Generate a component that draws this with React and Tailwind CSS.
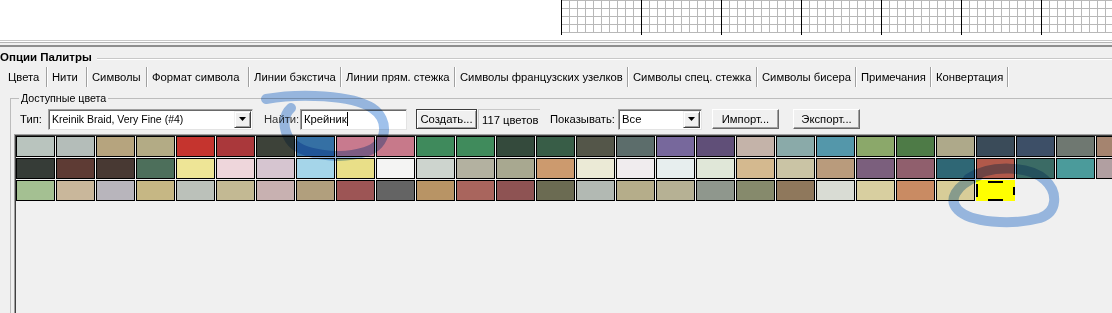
import React from "react";

const TABS = [
  ["Цвета", "w-[44px]"],
  ["Нити", "w-[40px]"],
  ["Символы", "w-[60px]"],
  ["Формат символа", "w-[102px]"],
  ["Линии бэкстича", "w-[92px]"],
  ["Линии прям. стежка", "w-[114px]"],
  ["Символы французских узелков", "w-[173px]"],
  ["Символы спец. стежка", "w-[129px]"],
  ["Символы бисера", "w-[99px]"],
  ["Примечания", "w-[75px]"],
  ["Конвертация", "w-[77px]"],
];

const ROWS = [
  ["#b9c4be", "#b4bdb9", "#b6a47e", "#b3ab85", "#c5342e", "#aa383b", "#3d4239", "#3570a4", "#c87a8e", "#c7798a", "#3f8a5c", "#408b5c", "#344a3c", "#385d47", "#545649", "#5c6d6b", "#77689c", "#604f78", "#c4b3a9", "#8aaaa9", "#5497aa", "#8ba86a", "#4e7b47", "#aea98a", "#3a4b59", "#3d4f67", "#6f7871", "#a5846f"],
  ["#363c37", "#5e3b34", "#483933", "#4d6f5b", "#eee596", "#eed6db", "#d6c5d0", "#a5d5e9", "#e9df88", "#f4f4f3", "#cdd4ce", "#b3b1a0", "#a8a890", "#cc9a6e", "#ebead6", "#f0ecee", "#e7eeee", "#e0e7d8", "#d4b98f", "#cac4a5", "#b99b7c", "#7b5f7d", "#905f6d", "#2f6775", "#b1594a", "#3b6b65", "#4b9b9b", "#b19fa1"],
  ["#a4c092", "#c9b79b", "#b8b5bc", "#c6b784", "#bbc1ba", "#c3b993", "#c8b1b1", "#b19f7d", "#9d5555", "#646464", "#b89465", "#a9655d", "#8e5353", "#6b6b52", "#b2b9b3", "#b5ad8a", "#b6b194", "#8f978d", "#868a6c", "#8f785c", "#d9dcd4", "#d8cfa0", "#c98b63", "#d8cd98"],
];

function Grid() {
  const cols = Array.from({ length: 69 }, (_, i) => i * 8);
  return (
    <svg width="551" height="36" className="block">
      {[0, 8, 16, 24, 32].map((y) => (
        <line key={"h" + y} x1="0" x2="551" y1={y + 0.5} y2={y + 0.5} stroke="#b8b8b8" />
      ))}
      {cols.map((x) => (
        <line
          key={"v" + x}
          x1={x + 0.5}
          x2={x + 0.5}
          y1="0"
          y2={x % 80 === 0 ? 35 : 33}
          stroke={x % 80 === 0 ? "#000" : "#b8b8b8"}
        />
      ))}
    </svg>
  );
}

function DropButton() {
  return (
    <div className="w-[17px] h-[17px] mr-px bg-[#f0f0f0] border border-t-[#f0f0f0] border-l-[#f0f0f0] border-r-[#404040] border-b-[#404040] shadow-[inset_1px_1px_0_#fff,inset_-1px_-1px_0_#a0a0a0] flex items-center justify-center">
      <svg width="7" height="4" viewBox="0 0 7 4">
        <path d="M0 0h7L3.5 4z" fill="#000" />
      </svg>
    </div>
  );
}

function Sunken({ className, children }) {
  return (
    <div className={"h-[21px] bg-white border border-t-[#a0a0a0] border-l-[#a0a0a0] border-r-[#e3e3e3] border-b-[#e3e3e3] shadow-[inset_1px_1px_0_#696969] flex items-center " + className}>
      {children}
    </div>
  );
}

function Button({ className, children }) {
  return (
    <div className={"h-[20px] bg-[#f0f0f0] flex items-center justify-center " + className}>
      {children}
    </div>
  );
}

function Swatch({ color }) {
  return <div className="w-[39px] h-[21px] shrink-0 border border-black" style={{ backgroundColor: color }} />;
}

export default function App() {
  return (
    <div className="relative w-[1112px] h-[313px] overflow-hidden bg-[#f0f0f0] text-black font-['Liberation_Sans',Arial,sans-serif] text-[11.25px] leading-[14px]">
      <div className="h-[40px] bg-white flex">
        <div className="w-[561px] shrink-0" />
        <Grid />
      </div>
      <div className="h-px bg-[#c8c8c8]" />
      <div className="h-px bg-white" />
      <div className="h-px bg-[#b4b4b4]" />
      <div className="h-[2px]" />
      <div className="h-[2px] bg-[#8e8e8e]" />

      <div className="h-[20px] flex items-center">
        <span className="font-bold text-[11.5px] whitespace-nowrap pr-[5px]">Опции Палитры</span>
        <div className="flex-1 mt-[2px] h-px bg-[#c8c8c8] shadow-[0_1px_0_#fff]" />
      </div>

      <div className="h-[20px] flex pl-[3px]">
        {TABS.map(([label, w]) => (
          <div
            key={label}
            className={"h-full shrink-0 pl-[5px] flex items-center whitespace-nowrap border-r border-[#a0a0a0] shadow-[1px_0_0_#fff] " + w}
          >
            {label}
          </div>
        ))}
      </div>

      <fieldset className="mt-[4px] ml-[10px] w-[1200px] pl-[3px] border-t border-l border-[#bcbcbc]">
        <legend className="ml-[5px] px-[2px] leading-[14px] text-[10.7px]">Доступные цвета</legend>

        <div className="mt-[4px] h-[20px] flex items-center whitespace-nowrap">
          <span className="ml-[6px] w-[28px]">Тип:</span>
          <Sunken className="w-[205px] justify-between">
            <span className="pl-[3px] text-[10.5px]">Kreinik Braid, Very Fine (#4)</span>
            <DropButton />
          </Sunken>
          <span className="ml-[11px] w-[36px] text-[#333]">Найти:</span>
          <Sunken className="w-[107px]">
            <span className="pl-[3px]">Крейник</span>
            <span className="w-px h-[14px] bg-black" />
          </Sunken>
          <Button className="ml-[9px] w-[61px] border border-[#3c3c3c] shadow-[inset_1px_1px_0_#fff,inset_-1px_-1px_0_#a0a0a0]">
            Создать...
          </Button>
          <div className="ml-px w-[62px] h-[20px] border-t border-l border-[#c8c8c8] flex items-center pl-[3px]">
            117 цветов
          </div>
          <span className="ml-[10px] w-[68px]">Показывать:</span>
          <Sunken className="w-[84px] justify-between">
            <span className="pl-[3px]">Все</span>
            <DropButton />
          </Sunken>
          <Button className="ml-[10px] w-[67px] border border-t-white border-l-white border-r-[#696969] border-b-[#696969] shadow-[inset_-1px_-1px_0_#a0a0a0]">
            Импорт...
          </Button>
          <Button className="ml-[14px] w-[67px] border border-t-white border-l-white border-r-[#696969] border-b-[#696969] shadow-[inset_-1px_-1px_0_#a0a0a0]">
            Экспорт...
          </Button>
        </div>

        <div className="mt-[5px] h-[200px] pt-px pl-px border-t border-l border-[#a0a0a0] shadow-[inset_1px_1px_0_#404040] flex flex-col gap-px">
          {ROWS.map((row, r) => (
            <div key={r} className="flex gap-px">
              {row.map((c, i) => (
                <Swatch key={i} color={c} />
              ))}
              {r === 2 && (
                <div className="relative w-[39px] h-[21px] shrink-0 bg-[#ffff00]">
                  <svg width="39" height="21" className="absolute inset-0">
                    <g stroke="#000" strokeWidth="2">
                      <line x1="12" x2="27" y1="2" y2="2" />
                      <line x1="12" x2="27" y1="20" y2="20" />
                      <line x1="1" x2="1" y1="4" y2="17" />
                      <line x1="38" x2="38" y1="7" y2="15" />
                    </g>
                  </svg>
                </div>
              )}
            </div>
          ))}
        </div>
      </fieldset>

      <svg width="1112" height="313" className="absolute inset-0 pointer-events-none mix-blend-multiply">
        <g fill="none" stroke="#9fc1eb" strokeWidth="10" strokeLinecap="round" strokeLinejoin="round">
          <path d="M266 99 C300 93 352 95 372 108 C390 120 388 145 365 152 C340 160 300 155 290 140 C282 128 283 115 291 108" />
          <path d="M968 179 C990 164 1030 166 1045 180 C1058 192 1058 212 1040 218 C1010 226 970 222 958 210 C948 200 955 186 978 176" />
        </g>
      </svg>
    </div>
  );
}
